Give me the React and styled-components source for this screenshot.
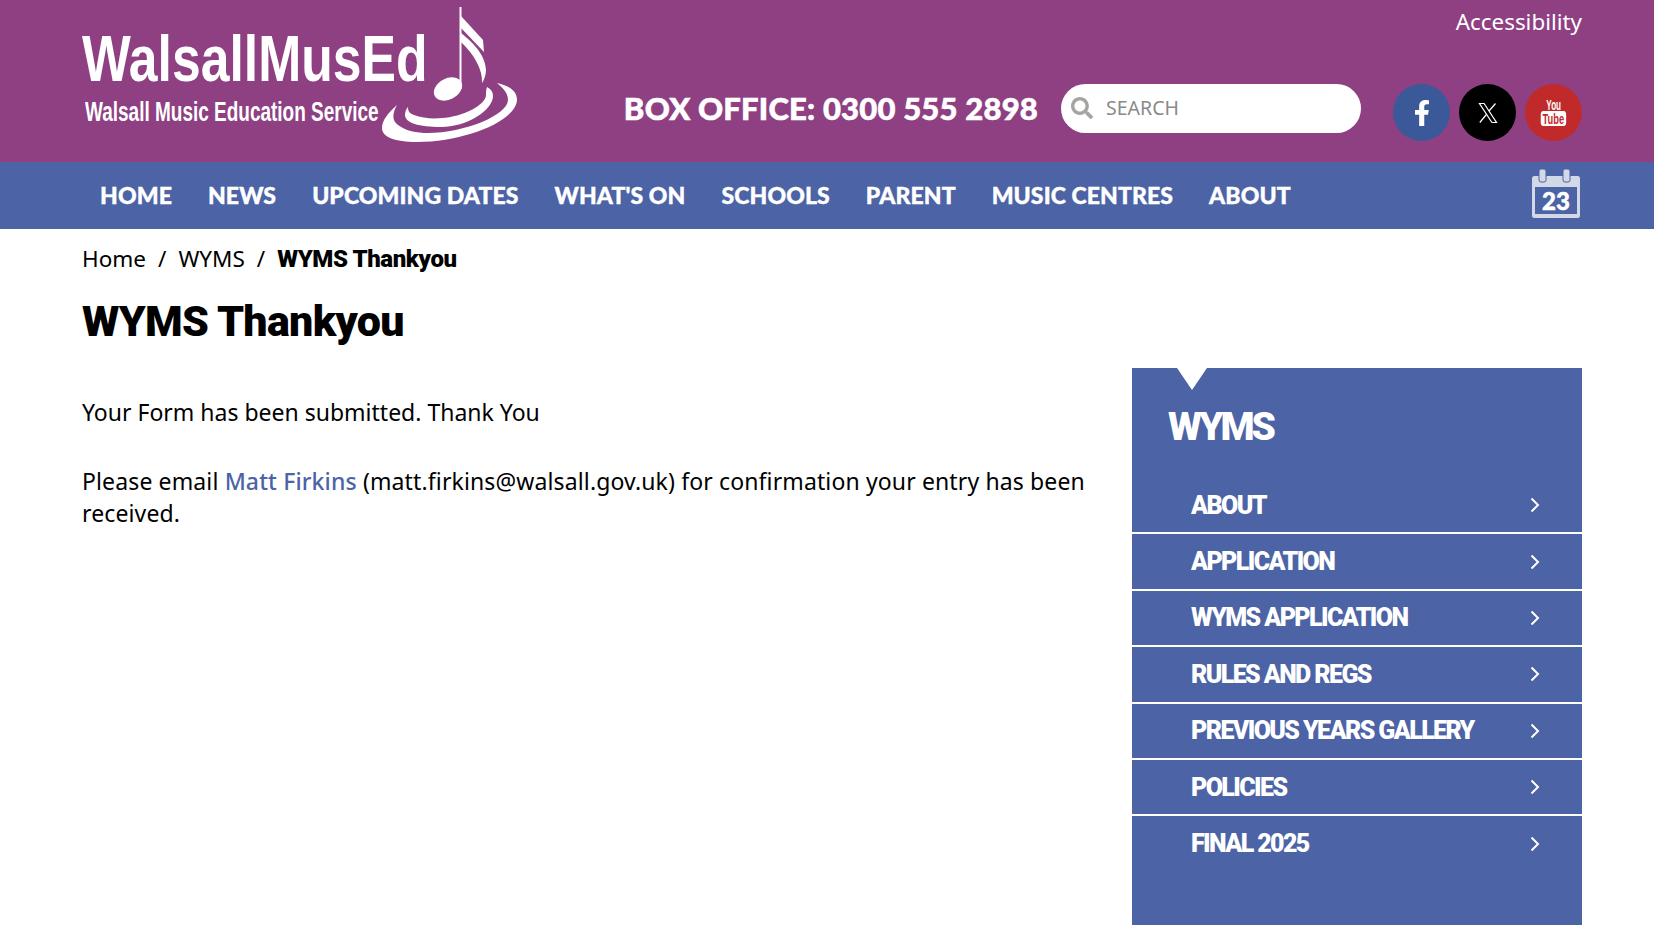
import React from 'react'
import styled, { createGlobalStyle } from 'styled-components'
import { FaFacebookF, FaSearch } from 'react-icons/fa'

const GlobalStyle = createGlobalStyle`
  html, body {
    margin: 0;
    padding: 0;
    background: #fff;
    color: #000;
    font-family: "Noto Sans", "Open Sans", sans-serif;
  }
  * { box-sizing: border-box; }
`

const Container = styled.div`
  width: 1500px;
  margin-left: 82px;
`

const HeaderS = styled.header`
  background: #8e4083;
  height: 162px;
`

const HeaderInner = styled(Container)`
  display: flex;
  height: 100%;
  justify-content: space-between;
`

const Logo = styled.a`
  position: relative;
  display: block;
  width: 448px;
  height: 162px;
  color: #fff;

  svg {
    position: absolute;
    left: 0;
    top: 0;
  }
`

const LogoName = styled.div`
  font-family: "Liberation Sans", sans-serif;
  font-weight: 700;
  font-size: 65px;
  line-height: 65px;
  padding-top: 26px;
  white-space: nowrap;
  transform: scaleX(0.795);
  transform-origin: left center;
`

const LogoSub = styled.div`
  font-family: "Liberation Sans", sans-serif;
  font-weight: 700;
  font-size: 27px;
  line-height: 30px;
  margin-top: 6px;
  margin-left: 3px;
  white-space: nowrap;
  transform: scaleX(0.703);
  transform-origin: left center;
`

const HeaderRight = styled.div`
  display: flex;
  flex-direction: column;
  align-items: flex-end;
`

const Accessibility = styled.a`
  font-size: 22.4px;
  line-height: 28px;
  margin-top: 8px;
  color: #fff;
`

const HeaderTools = styled.div`
  display: flex;
  align-items: flex-start;
  margin-top: 48px;
`

const BoxOffice = styled.div`
  font-family: Lato, sans-serif;
  font-weight: 900;
  font-size: 31px;
  letter-spacing: 0.2px;
  -webkit-text-stroke: 0.6px #fff;
  line-height: 49px;
  color: #fff;
  white-space: nowrap;
  margin-right: 23px;
`

const Search = styled.div`
  display: flex;
  align-items: center;
  width: 300px;
  height: 49px;
  background: #fff;
  border-radius: 25px;
  padding: 0 0 2px 10px;
  margin-right: 32px;
  color: #8a8a8a;
  font-size: 19.5px;

  svg {
    color: #a5a5a0;
    margin-right: 13px;
  }
`

const Socials = styled.div`
  display: flex;
  gap: 9px;
`

const Social = styled.a`
  display: flex;
  flex-direction: column;
  align-items: center;
  justify-content: center;
  width: 57px;
  height: 57px;
  border-radius: 50%;
  color: #fff;
  background: ${p => p.$bg};
`

const YouText = styled.span`
  font-family: "Liberation Sans", sans-serif;
  font-weight: 700;
  font-size: 14px;
  line-height: 12px;
  transform: scaleX(0.58);
`

const TubeText = styled.span`
  font-family: "Liberation Sans", sans-serif;
  font-weight: 700;
  font-size: 15px;
  line-height: 15px;
  padding: 0 3px;
  background: #fff;
  color: #c12a2a;
  border-radius: 4px;
  transform: scaleX(0.62);
`

const NavBar = styled.nav`
  background: #4c63a6;
  height: 67px;
`

const NavInner = styled(Container)`
  display: flex;
  align-items: center;
  justify-content: space-between;
  height: 100%;
  padding-right: 2px;

  svg {
    margin-bottom: 3px;
  }
`

const NavList = styled.div`
  display: flex;
  gap: 36px;
  padding: 0 0 2px 18px;
`

const NavItem = styled.a`
  font-family: Lato, sans-serif;
  font-weight: 900;
  font-size: 23px;
  letter-spacing: 0.1px;
  -webkit-text-stroke: 0.4px #fff;
  color: #fff;
  white-space: nowrap;
`

const Crumbs = styled.div`
  display: flex;
  align-items: center;
  gap: 12px;
  font-size: 22.5px;
  line-height: 32px;
  margin-top: 14px;
`

const CrumbCurrent = styled.strong`
  font-family: Roboto, sans-serif;
  font-weight: 900;
  font-size: 24px;
  letter-spacing: -0.4px;
`

const Title = styled.h1`
  font-family: Roboto, sans-serif;
  font-size: 43px;
  line-height: 56px;
  font-weight: 900;
  letter-spacing: -0.7px;
  margin: 18px 0 0;
`

const Columns = styled.div`
  display: flex;
  justify-content: space-between;
  margin-top: 19px;
`

const Content = styled.div`
  width: 1010px;
  padding-top: 28px;
  font-size: 23px;
  line-height: 32px;
`

const Para = styled.p`
  margin: 0 0 37px;
  letter-spacing: ${p => p.$spacing || 0}px;
`

const Highlight = styled.a`
  color: #4c63a6;
  font-weight: 500;
`

const Side = styled.aside`
  position: relative;
  width: 450px;
  height: 557px;
  background: #4c63a6;
  color: #fff;
  padding-top: 32px;

  &::before {
    content: "";
    position: absolute;
    left: 45px;
    top: 0;
    border-style: solid;
    border-width: 22px 15px 0;
    border-color: #fff transparent transparent;
  }
`

const SideTitle = styled.h2`
  font-family: Roboto, sans-serif;
  font-size: 39px;
  line-height: 48px;
  font-weight: 900;
  letter-spacing: -3px;
  margin: 3px 0 27px 36px;
`

const SideRow = styled.a`
  display: flex;
  align-items: center;
  justify-content: space-between;
  height: 56.4px;
  padding: 0 42px 0 59px;
  font-family: Roboto, sans-serif;
  font-size: 25px;
  font-weight: 900;
  letter-spacing: -1.6px;
  border-bottom: 2px solid ${p => (p.$last ? 'transparent' : '#fff')};
`

const Chevron = () => (
  <svg width="10" height="16" viewBox="0 0 10 16" fill="none" stroke="#fff" strokeWidth="2">
    <path d="M1.5 1.5 8 8l-6.5 6.5" />
  </svg>
)

const XMark = () => (
  <svg width="24" height="24" viewBox="0 0 24 24" fill="none" stroke="#fff" strokeWidth="1.2">
    <path d="M3.5 2.5h4.6L20.5 21.5h-4.6z" />
    <path d="M19.5 2.5 13 10M10.8 13 3.8 21.5" />
  </svg>
)

const Note = () => (
  <svg width="448" height="162" viewBox="82 0 448 162" fill="#fff">
    <path d="M459.5 7h2v82h-2z" />
    <ellipse cx="448" cy="89" rx="15" ry="10.5" transform="rotate(-28 448 89)" />
    <path d="M461 16 483 40l1 12L461 28z" />
    <path d="M461 33c10 8 24 20 25 37 0 5-2 10-4 13 1-13-8-29-21-41z" />
    <path d="M497 83c14 3 20 9 20 17-1 21-52 42-100 42-22 0-35-5-35-14 0-8 7-16 15-23-4 7-6 15 1 20 8 6 18 8 30 8 36 0 80-18 80-33 0-7-5-12-11-17z" />
    <path d="M487 87c4 2 6 5 6 9 0 14-26 31-52 31-22 0-36-4-36-12 0-3 1-6 3-8 0 4 1 6 6 8 8 3 18 4 28 3 20-1 44-13 44-23 0-3 0-5 1-8z" />
  </svg>
)

const Calendar = () => (
  <svg width="48" height="50" viewBox="0 0 48 50">
    <rect x="0" y="7" width="48" height="42" rx="2.5" fill="#d3d8e6" />
    <rect x="3" y="18" width="42" height="27" fill="#4c63a6" />
    <rect x="7" y="0" width="7" height="13" rx="2" fill="#d3d8e6" stroke="#4c63a6" />
    <rect x="31" y="0" width="7" height="13" rx="2" fill="#d3d8e6" stroke="#4c63a6" />
    <text x="24" y="41" textAnchor="middle" fontFamily="Lato, sans-serif" fontWeight="900" fontSize="24" fill="#fff" stroke="#fff" strokeWidth="0.5">23</text>
  </svg>
)

const navItems = ['HOME', 'NEWS', 'UPCOMING DATES', "WHAT'S ON", 'SCHOOLS', 'PARENT', 'MUSIC CENTRES', 'ABOUT']
const sideItems = ['ABOUT', 'APPLICATION', 'WYMS APPLICATION', 'RULES AND REGS', 'PREVIOUS YEARS GALLERY', 'POLICIES', 'FINAL 2025']

const App = () => {
  return (
    <>
      <GlobalStyle />
      <HeaderS>
        <HeaderInner>
          <Logo>
            <LogoName>WalsallMusEd</LogoName>
            <LogoSub>Walsall Music Education Service</LogoSub>
            <Note />
          </Logo>
          <HeaderRight>
            <Accessibility>Accessibility</Accessibility>
            <HeaderTools>
              <BoxOffice>BOX OFFICE: 0300 555 2898</BoxOffice>
              <Search>
                <FaSearch size={22} />
                SEARCH
              </Search>
              <Socials>
                <Social $bg="#3b5998"><FaFacebookF size={26} /></Social>
                <Social $bg="#000"><XMark /></Social>
                <Social $bg="#c12a2a">
                  <YouText>You</YouText>
                  <TubeText>Tube</TubeText>
                </Social>
              </Socials>
            </HeaderTools>
          </HeaderRight>
        </HeaderInner>
      </HeaderS>
      <NavBar>
        <NavInner>
          <NavList>
            {navItems.map(item => <NavItem key={item}>{item}</NavItem>)}
          </NavList>
          <Calendar />
        </NavInner>
      </NavBar>
      <Container>
        <Crumbs>
          <span>Home</span>
          <span>/</span>
          <span>WYMS</span>
          <span>/</span>
          <CrumbCurrent>WYMS Thankyou</CrumbCurrent>
        </Crumbs>
        <Title>WYMS Thankyou</Title>
        <Columns>
          <Content>
            <Para>Your Form has been submitted. Thank You</Para>
            <Para $spacing={0.13}>
              Please email <Highlight>Matt Firkins</Highlight> (matt.firkins@walsall.gov.uk) for confirmation your entry has been received.
            </Para>
          </Content>
          <Side>
            <SideTitle>WYMS</SideTitle>
            {sideItems.map((item, i) => (
              <SideRow key={item} $last={i === sideItems.length - 1}>
                {item}
                <Chevron />
              </SideRow>
            ))}
          </Side>
        </Columns>
      </Container>
    </>
  )
}

export default App
